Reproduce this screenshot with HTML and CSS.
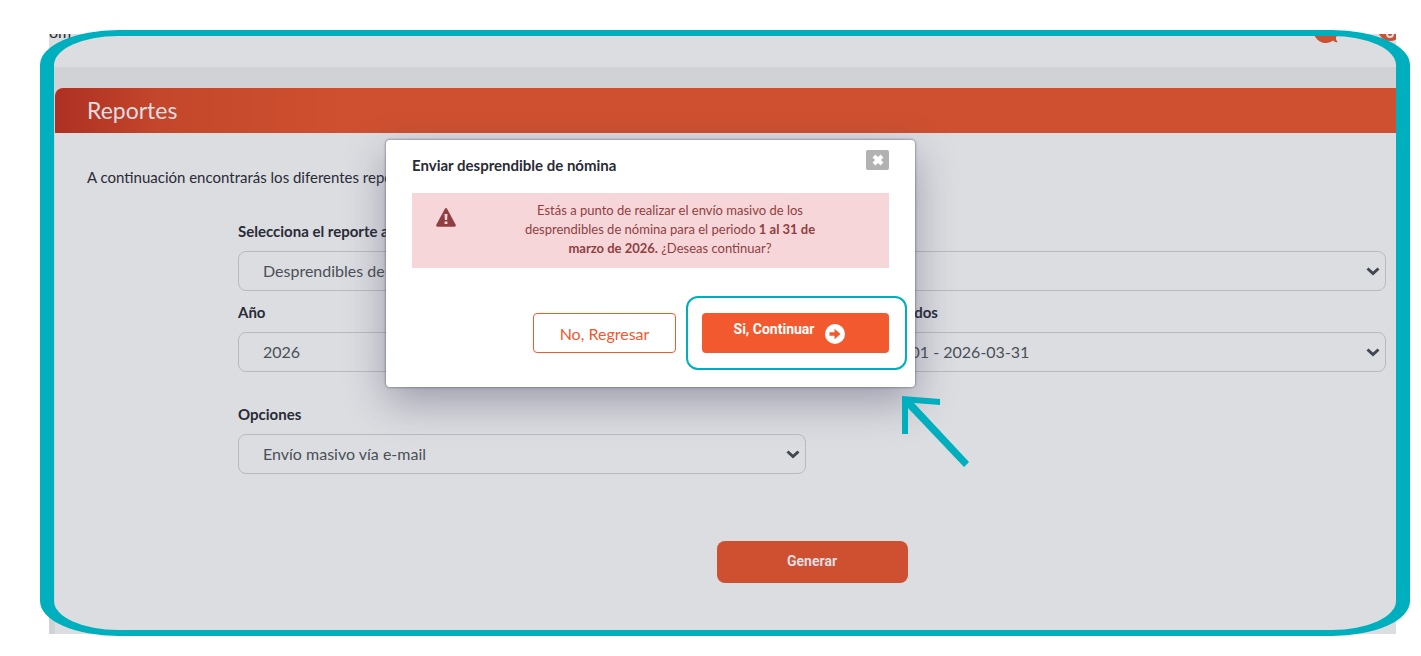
FILE: index.html
```html
<!DOCTYPE html>
<html lang="es">
<head>
    <meta charset="UTF-8">
    <meta name="viewport" content="width=device-width, initial-scale=1.0">
    <title>Reportes</title>
    <link rel="stylesheet" href="styles.css">
</head>
<body>

    <div class="screen">
        <header class="topbar">
            <span class="user">om</span>
            <div class="topbar-icons">
                <svg width="24" height="24" viewBox="0 0 24 24">
                    <path d="M12 0a12 12 0 1 0 7 21.500q2 2.200 4.500 1.500q-1.800-1.500-1.500-4.500A12 12 0 0 0 12 0z" fill="#ce5030"/>
                </svg>
                <svg width="24" height="24" viewBox="0 0 24 24">
                    <circle cx="12" cy="10" r="12" fill="#ce5030"/>
                    <path d="M9 10v5a3 3 0 0 0 6 0v-5" fill="none" stroke="#dcdde0" stroke-width="2"/>
                </svg>
            </div>
        </header>

        <main class="panel">
            <h1 class="panel-title">Reportes</h1>
            <div class="panel-body">
                <p class="intro">A continuación encontrarás los diferentes reportes</p>
                <form class="report-form">
                    <div class="field field-wide">
                        <label for="report">Selecciona el reporte a generar</label>
                        <select id="report"><option>Desprendibles de nómina</option></select>
                    </div>
                    <div class="field">
                        <label for="year">Año</label>
                        <select id="year"><option>2026</option></select>
                    </div>
                    <div class="field">
                        <label for="period">Periodos cerrados</label>
                        <select id="period"><option>2026-03-01 - 2026-03-31</option></select>
                    </div>
                    <div class="field field-options">
                        <label for="options">Opciones</label>
                        <select id="options"><option>Envío masivo vía e-mail</option></select>
                    </div>
                    <button type="button" class="btn-generate">Generar</button>
                </form>
            </div>
        </main>

        <div class="modal" role="dialog" aria-labelledby="modal-title">
            <div class="modal-header">
                <h2 id="modal-title">Enviar desprendible de nómina</h2>
                <button type="button" class="close" aria-label="Cerrar">
                    <svg width="12" height="12" viewBox="0 0 12 12">
                        <path d="M2 2l8 8M10 2l-8 8" stroke="#fff" stroke-width="4"/>
                    </svg>
                </button>
            </div>
            <div class="alert">
                <svg width="20" height="19" viewBox="0 0 20 19">
                    <path d="M8.900 0.700q1.100-1.400 2.200 0l8.600 16q0.700 1.800-1.200 2.100h-17q-1.900-0.300-1.200-2.100z" fill="#8f3f41"/>
                    <path d="M8.500 6h3l-0.400 6h-2.200zM8.600 13.500h2.800v2.600h-2.800z" fill="#f7d6da"/>
                </svg>
                <p>Estás a punto de realizar el envío masivo de los desprendibles de nómina para el periodo <strong>1 al 31 de marzo de 2026.</strong> ¿Deseas continuar?</p>
            </div>
            <div class="modal-actions">
                <button type="button" class="btn-back">No, Regresar</button>
                <div class="highlight">
                    <button type="button" class="btn-continue">
                        <span>Si, Continuar</span>
                        <svg width="20" height="20" viewBox="0 0 20 20">
                            <circle cx="10" cy="10" r="10" fill="#fff"/>
                            <path d="M4.500 8.300h5V4.800l6 5.200-6 5.200v-3.500h-5z" fill="#f2592e"/>
                        </svg>
                    </button>
                </div>
            </div>
            <svg class="pointer" width="68" height="72" viewBox="0 0 68 72">
                <path d="M0 0L38 3V9L12 7L67 66L62 71L6 12V38H0z" fill="#00afbd"/>
            </svg>
        </div>

        <div class="frame"></div>
    </div>

</body>
</html>
```

FILE: styles.css
```css
* {
    box-sizing: border-box;
}

body {
    margin: 0;
    background-color: #fff;
    font-family: Lato, sans-serif;
    font-size: 15px;
    color: #292b36;
}

button,
select {
    font-family: inherit;
}

.screen {
    position: relative;
    margin: 34px 25px 22px 49px;
    background-color: #d1d2d6;
}

/* Top bar */
.topbar {
    display: flex;
    justify-content: space-between;
    align-items: flex-end;
    height: 33px;
    padding-bottom: 24px;
    background-color: #dcdde0;
    overflow: hidden;
}

.user {
    padding-bottom: 3px;
    font-size: 16px;
    line-height: 16px;
}

.topbar-icons {
    display: flex;
    gap: 40px;
    margin-right: -6px;
}

/* Panel */
.panel {
    margin: 21px 0 0 6px;
    background-color: #dcdde1;
    border-radius: 8px 0 0 0;
}

.panel-title {
    margin: 0;
    padding: 0 32px;
    background: linear-gradient(to right, #ad3023, #c5472b 110px, #ce5030 290px);
    border-radius: 8px 0 0 0;
    font-size: 23px;
    font-weight: 400;
    line-height: 45px;
    color: #dfdde0;
}

.panel-body {
    padding: 33px 10px 51px 32px;
}

.intro {
    margin: 0 0 33px;
    line-height: 22px;
}

.report-form {
    display: grid;
    grid-template-columns: 1fr 1fr;
    column-gap: 12px;
    row-gap: 11px;
    margin-left: 151px;
}

.field {
    display: flex;
    flex-direction: column;
    gap: 10px;
}

.field-wide {
    grid-column: 1 / -1;
}

.field-options {
    grid-column: 1;
    margin-top: 21px;
}

.field label {
    font-weight: 700;
    line-height: 20px;
}

.field select {
    height: 40px;
    padding: 0 24px 2px;
    border: 1px solid #b9babe;
    border-radius: 8px;
    appearance: none;
    background: #dcdde1 url("data:image/svg+xml,%3Csvg xmlns='http://www.w3.org/2000/svg' width='14' height='9' viewBox='0 0 14 9'%3E%3Cpath d='M1.500 1.500L7 6.500l5.500-5' fill='none' stroke='%233f4852' stroke-width='3'/%3E%3C/svg%3E") no-repeat right 5px center;
    font-size: 16px;
    color: #495057;
}

.btn-generate {
    grid-column: 1 / -1;
    justify-self: center;
    width: 191px;
    height: 42px;
    margin-top: 56px;
    padding: 0 0 3px;
    border: none;
    border-radius: 8px;
    background-color: #ce5030;
    font-family: Roboto, sans-serif;
    font-size: 14px;
    font-weight: 700;
    color: #dfdde0;
}

/* Modal */
.modal {
    position: absolute;
    top: 106px;
    left: 337px;
    width: 529px;
    padding: 10px 26px 33px;
    background-color: #fff;
    border-radius: 4px;
    box-shadow: 0 0 2px 1px rgba(70, 70, 95, 0.4), 0 15px 40px rgba(60, 60, 90, 0.4);
}

.modal-header {
    display: flex;
    justify-content: space-between;
    align-items: flex-start;
}

.modal-header h2 {
    margin: 0;
    font-size: 15px;
    line-height: 30px;
}

.close {
    display: flex;
    align-items: center;
    justify-content: center;
    width: 23px;
    height: 20px;
    padding: 0;
    border: none;
    border-radius: 2px;
    background-color: #b2b2b2;
}

.alert {
    display: flex;
    align-items: flex-start;
    margin-top: 13px;
    padding: 8px 5px 10px 24px;
    background-color: #f7d6da;
    color: #8f3f41;
}

.alert svg {
    flex: none;
    margin-top: 7px;
}

.alert p {
    width: 300px;
    margin: 0 auto;
    font-size: 13px;
    line-height: 19px;
    text-align: center;
}

.modal-actions {
    display: flex;
    justify-content: flex-end;
    align-items: center;
    gap: 10px;
    margin: 28px -18px -16px 0;
}

.btn-back,
.btn-continue {
    height: 40px;
    border-radius: 4px;
}

.btn-back {
    width: 143px;
    border: 1px solid #f2592e;
    background-color: #fff;
    font-size: 16px;
    color: #f2592e;
}

.highlight {
    padding: 15px 16px 15px 14px;
    border: 2px solid #00afbd;
    border-radius: 12px;
}

.btn-continue {
    display: flex;
    justify-content: center;
    align-items: flex-start;
    gap: 11px;
    width: 187px;
    padding: 8px 12px 0 0;
    border: none;
    background-color: #f2592e;
    font-family: Roboto, sans-serif;
    font-size: 14px;
    font-weight: 700;
    line-height: 16px;
    color: #fff;
}

.btn-continue svg {
    margin-top: 3px;
}

.pointer {
    position: absolute;
    top: 256px;
    left: 516px;
}

/* Teal border over the whole screen */
.frame {
    position: absolute;
    inset: -4px -14px -2px -9px;
    border: solid #00afbd;
    border-width: 6px 14px;
    border-radius: 78px / 35px;
    pointer-events: none;
}
```
